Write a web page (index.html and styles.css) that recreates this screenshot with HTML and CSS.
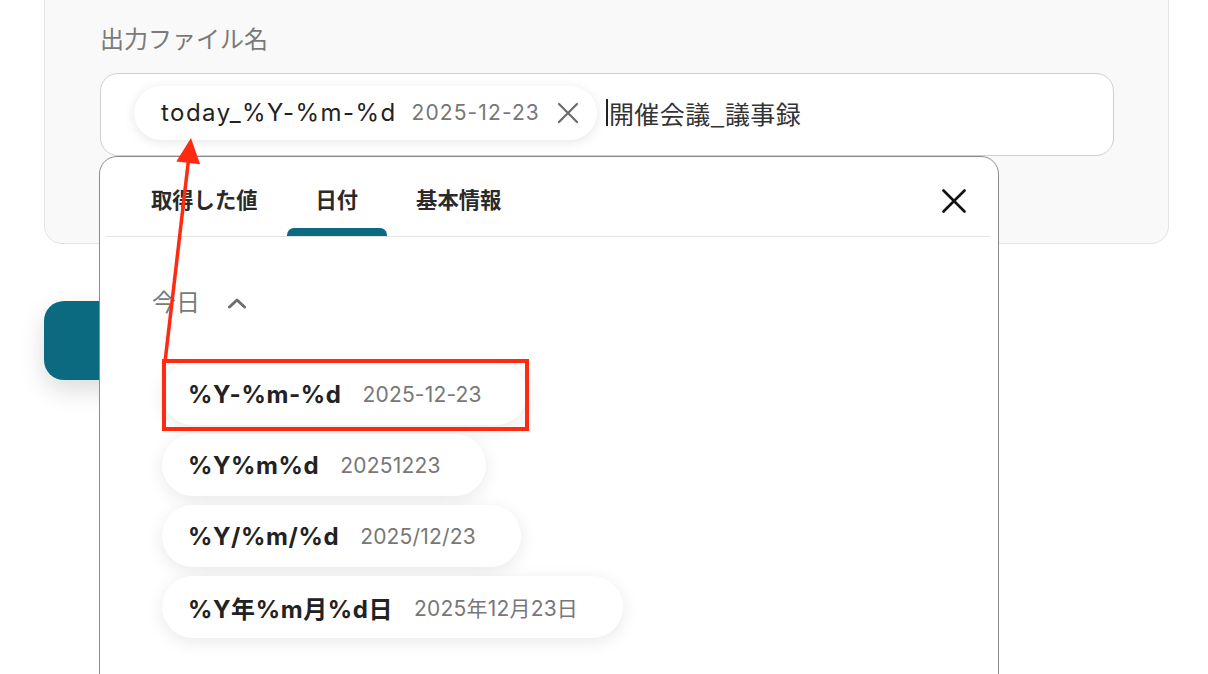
FILE: index.html
```html
<!DOCTYPE html>
<html lang="ja">
<head>
<meta charset="utf-8">
<title>出力ファイル名</title>
<link rel="stylesheet" href="styles.css">
</head>
<body>
<div class="page">
  <section class="card">
    <div class="label">出力ファイル名</div>
    <div class="field-wrap">
      <div class="field">
        <span class="chip">
          <span class="chip-key">today_%Y-%m-%d</span>
          <span class="chip-val">2025-12-23</span>
          <svg class="chip-x" viewBox="0 0 22 22" width="22" height="22"><path d="M2 2 L20 20 M20 2 L2 20" stroke="#6b6b6b" stroke-width="2.2" stroke-linecap="round" fill="none"/></svg>
        </span>
        <span class="caret"></span>
        <span class="field-text">開催会議_議事録</span>
      </div>
      <div class="dropdown">
        <div class="tabs">
          <div class="tab"><span class="tab-label">取得した値</span><span class="tab-bar"></span></div>
          <div class="tab active"><span class="tab-label">日付</span><span class="tab-bar"></span></div>
          <div class="tab"><span class="tab-label">基本情報</span><span class="tab-bar"></span></div>
          <svg class="close" viewBox="0 0 24 24" width="24" height="24"><path d="M1.5 1.5 L22.5 22.5 M22.5 1.5 L1.5 22.5" stroke="#111" stroke-width="2.6" stroke-linecap="round" fill="none"/></svg>
        </div>
        <div class="section-head">
          <span class="section-title">今日</span>
          <svg class="chev" viewBox="0 0 20 12" width="20" height="12"><path d="M2.5 10 L10 3 L17.5 10" stroke="#6f6f6f" stroke-width="3" stroke-linecap="round" stroke-linejoin="round" fill="none"/></svg>
        </div>
        <div class="items">
          <div class="item"><span class="item-key">%Y-%m-%d</span><span class="item-val">2025-12-23</span><span class="highlight"></span></div>
          <div class="item"><span class="item-key">%Y%m%d</span><span class="item-val">20251223</span></div>
          <div class="item"><span class="item-key">%Y/%m/%d</span><span class="item-val">2025/12/23</span></div>
          <div class="item"><span class="item-key">%Y年%m月%d日</span><span class="item-val">2025年12月23日</span></div>
        </div>
      </div>
    </div>
  </section>
  <div class="primary-btn"></div>
</div>
<svg class="annot" viewBox="0 0 1208 674" width="1208" height="674">
  <line x1="165" y1="362" x2="188.5" y2="160" stroke="#ff2a10" stroke-width="3.5"/>
  <polygon points="191,138 176.3,161.5 200.1,164.2" fill="#ff2a10"/>
</svg>
</body>
</html>
```
FILE: styles.css
```css
* { box-sizing: border-box; }
html, body { margin: 0; padding: 0; }
body {
  background: #ffffff;
  font-family: "Inter", "Noto Sans CJK JP", sans-serif;
  color: #222;
  width: 1208px;
  height: 674px;
  overflow: hidden;
  position: relative;
}
.page {
  padding: 0 39px 0 44px;
}
.card {
  margin-top: -40px;
  background: #f9f9f9;
  border: 1px solid #e3e3e3;
  border-radius: 18px;
  padding: 59px 54px 87px 55px;
}
.label {
  font-family: "Noto Sans CJK JP", sans-serif;
  font-size: 24px;
  line-height: 36px;
  color: #7a7a7a;
  margin-bottom: 17px;
}
.field-wrap {
  position: relative;
}
.field {
  height: 83px;
  background: #fff;
  border: 1px solid #cfcfcf;
  border-radius: 18px;
  display: flex;
  align-items: center;
  padding: 0 0 4px 33px;
}
.chip {
  height: 54px;
  display: flex;
  align-items: center;
  background: #fff;
  border-radius: 27px;
  box-shadow: 0 2px 12px rgba(0,0,0,0.10);
  padding: 0 18px 0 27px;
}
.chip-key {
  font-size: 24px;
  color: #222;
  letter-spacing: 1.45px;
}
.chip-val {
  font-size: 21px;
  color: #777;
  margin-left: 15px;
  letter-spacing: 1.1px;
}
.chip-x {
  margin-left: 17px;
  display: block;
}
.caret {
  width: 2px;
  height: 27px;
  background: #222;
  margin-left: 9px;
}
.field-text {
  font-family: "Noto Sans CJK JP", sans-serif;
  font-size: 25px;
  color: #333;
  margin-left: 1px;
  letter-spacing: 0.4px;
}
.dropdown {
  position: absolute;
  top: 100%;
  left: -1px;
  width: 900px;
  height: 560px;
  background: #fff;
  border: 1px solid #8c8c8c;
  border-radius: 18px 18px 0 0;
  z-index: 2;
}
.tabs {
  margin: 0 8px 0 6px;
  padding: 26px 0 0 16px;
  height: 80px;
  border-bottom: 1px solid #e3e3e3;
  display: flex;
}
.tab {
  display: flex;
  flex-direction: column;
  align-items: center;
  padding: 0 29px;
}
.tab-label {
  font-family: "Noto Sans CJK JP", sans-serif;
  font-weight: 700;
  font-size: 21.3px;
  line-height: 32px;
  color: #2a2a2a;
}
.tab-bar {
  margin-top: 13px;
  height: 8px;
  width: calc(100% + 58px);
  border-radius: 7px 7px 0 0;
}
.tab.active .tab-bar {
  background: #0b6a80;
}
.close {
  margin-left: auto;
  margin-top: 6px;
  margin-right: 24px;
  display: block;
}
.section-head {
  display: flex;
  align-items: center;
  padding-left: 52px;
  margin-top: 45px;
  height: 36px;
}
.section-title {
  font-family: "Noto Sans CJK JP", sans-serif;
  font-size: 24px;
  color: #7a7a7a;
}
.chev {
  margin-left: 27px;
  margin-top: 6px;
  display: block;
}
.items {
  margin-top: 45px;
  padding-left: 62px;
  display: flex;
  flex-direction: column;
  align-items: flex-start;
  gap: 9px;
}
.item {
  position: relative;
  height: 62px;
  display: flex;
  align-items: center;
  background: #fff;
  border-radius: 31px;
  box-shadow: 0 4px 18px rgba(0,0,0,0.09);
  padding: 0 45px 0 26px;
}
.item-key {
  font-family: "Inter", "Noto Sans CJK JP", sans-serif;
  font-weight: 700;
  font-size: 24px;
  color: #222;
  letter-spacing: 0.6px;
}
.item-val {
  font-size: 21px;
  color: #777;
  margin-left: 21px;
  letter-spacing: 0.2px;
}
.highlight {
  position: absolute;
  top: -4px;
  left: 0;
  right: -2px;
  bottom: -6px;
  border: 4px solid #ff2a10;
}
.primary-btn {
  margin-top: 57px;
  width: 240px;
  height: 79px;
  background: #0b6a80;
  border-radius: 20px;
  box-shadow: 0 10px 26px rgba(0,0,0,0.14);
}
.annot {
  position: absolute;
  top: 0;
  left: 0;
  pointer-events: none;
  z-index: 5;
}
```
